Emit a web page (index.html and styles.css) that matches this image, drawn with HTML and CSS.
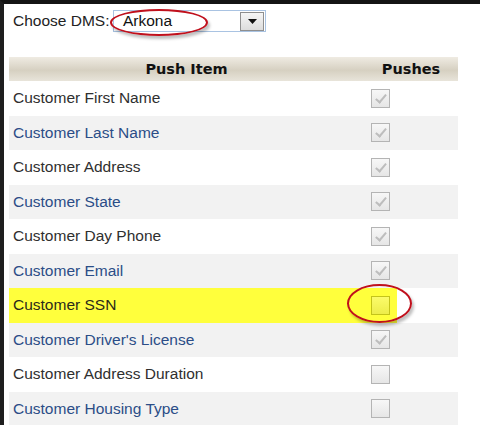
FILE: index.html
```
<!DOCTYPE html>
<html>
<head>
<meta charset="utf-8">
<link rel="stylesheet" href="styles.css">
</head>
<body>
<div class="frame">
  <div class="chooser">
    <span class="label">Choose DMS:</span>
    <div class="select">
      <span class="value">Arkona</span>
      <span class="btn"><svg width="9" height="5" viewBox="0 0 9 5"><path d="M0 0h9L4.5 5z" fill="#111"/></svg></span>
    </div>
  </div>
  <div class="table">
    <div class="head">
      <div class="c1">Push Item</div>
      <div class="c2">Pushes</div>
    </div>
    <div class="row odd"><div class="c1">Customer First Name</div><div class="c2"><span class="cb on"></span></div></div>
    <div class="row even"><div class="c1">Customer Last Name</div><div class="c2"><span class="cb on"></span></div></div>
    <div class="row odd"><div class="c1">Customer Address</div><div class="c2"><span class="cb on"></span></div></div>
    <div class="row even"><div class="c1">Customer State</div><div class="c2"><span class="cb on"></span></div></div>
    <div class="row odd"><div class="c1">Customer Day Phone</div><div class="c2"><span class="cb on"></span></div></div>
    <div class="row even"><div class="c1">Customer Email</div><div class="c2"><span class="cb on"></span></div></div>
    <div class="row hl"><div class="c1">Customer SSN</div><div class="c2"><span class="cb hlcb"></span></div></div>
    <div class="row even"><div class="c1">Customer Driver's License</div><div class="c2"><span class="cb on"></span></div></div>
    <div class="row odd"><div class="c1">Customer Address Duration</div><div class="c2"><span class="cb"></span></div></div>
    <div class="row even"><div class="c1">Customer Housing Type</div><div class="c2"><span class="cb"></span></div></div>
  </div>
  <div class="ring ring-a"></div>
  <div class="ring ring-b"></div>
</div>
</body>
</html>
```
FILE: styles.css
```
html, body {
  margin: 0;
  padding: 0;
  background: #fff;
}
body {
  font-family: "Liberation Sans", Arial, sans-serif;
  font-size: 15.5px;
  overflow: hidden;
}
.frame {
  position: relative;
  height: 421px;
  border-top: 4px solid #141414;
  border-left: 4px solid #1e1e1e;
  padding-left: 5px;
}
.chooser {
  display: flex;
  align-items: center;
  height: 22px;
  margin-top: 6px;
  margin-left: 4px;
  color: #222;
}
.label {
  width: 100px;
}
.select {
  position: relative;
  display: flex;
  align-items: center;
  justify-content: space-between;
  box-sizing: border-box;
  width: 153px;
  height: 22px;
  border: 1px solid #a9c3e2;
  background: #fff;
  padding: 0 1px 0 9px;
  color: #111;
}
.btn {
  display: flex;
  align-items: center;
  justify-content: center;
  box-sizing: border-box;
  width: 24px;
  height: 19px;
  border: 1px solid #8f8f8f;
  background: linear-gradient(#f6f6f6, #dcdcdc);
}
.table {
  margin-top: 25px;
  width: 449px;
}
.head {
  display: flex;
  height: 24px;
  align-items: center;
  background: linear-gradient(#efebe2, #d6d0c1 55%, #e8e4da);
  font-family: "DejaVu Sans", Verdana, sans-serif;
  font-weight: bold;
  font-size: 14.5px;
  color: #111;
}
.head .c1 {
  width: 355px;
  text-align: center;
}
.head .c2 {
  flex: 1;
  text-align: center;
}
.row {
  display: flex;
  align-items: center;
  height: 34.5px;
}
.row .c1 {
  width: 355px;
  padding-left: 4px;
  box-sizing: border-box;
}
.row .c2 {
  flex: 1;
  padding-left: 7px;
  display: flex;
  align-items: center;
}
.odd {
  background: #fff;
  color: #2f2f2f;
}
.even {
  background: #f2f2f2;
  color: #2b4d87;
}
.hl {
  background: linear-gradient(to right, #ffff3c 388px, #fff 388px);
  color: #2b2b1a;
}
.cb {
  position: relative;
  display: block;
  box-sizing: border-box;
  width: 19px;
  height: 19px;
  border: 1px solid #b4b4b4;
  background: linear-gradient(#f7f7f7, #e6e6e6);
}
.cb.on::after {
  content: "";
  position: absolute;
  left: 6px;
  top: 2px;
  width: 4px;
  height: 9px;
  border-right: 2px solid #bdbdbd;
  border-bottom: 2px solid #bdbdbd;
  transform: rotate(40deg);
}
.cb.hlcb {
  border-color: #c4c41a;
  background: linear-gradient(#fbfb6a, #eded4a);
}
.ring {
  position: absolute;
  border: 2px solid #c0101c;
  border-radius: 50%;
  box-shadow: 2px 3px 3px rgba(0, 0, 0, 0.25);
}
.ring-a {
  left: 106px;
  top: 5px;
  width: 94px;
  height: 23px;
}
.ring-b {
  left: 343px;
  top: 280px;
  width: 61px;
  height: 35px;
}
```
